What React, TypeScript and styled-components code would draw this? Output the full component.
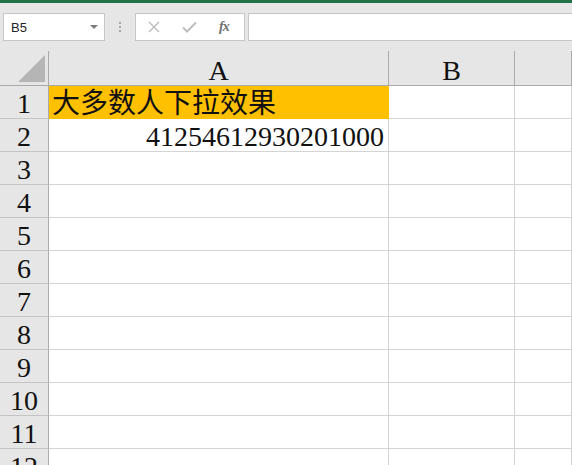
import React from 'react';
import styled, { createGlobalStyle } from 'styled-components';

const GlobalStyle = createGlobalStyle`
  html, body {
    margin: 0;
    padding: 0;
    background: #ffffff;
    overflow: hidden;
  }
`;

const Window = styled.div`
  width: 572px;
  height: 465px;
  overflow: hidden;
  background: #ffffff;
`;

// green ribbon edge at the very top
const RibbonEdge = styled.div`
  height: 3px;
  background: #217346;
`;

const FormulaBar = styled.div`
  height: 48px;
  box-sizing: border-box;
  padding: 10px 0 0 3px;
  background: #e6e6e6;
  display: flex;
  align-items: flex-start;
`;

const NameBox = styled.div`
  width: 102px;
  height: 28px;
  box-sizing: border-box;
  border: 1px solid #c6c6c6;
  background: #ffffff;
  display: flex;
  align-items: center;
  justify-content: space-between;
  padding: 0 5px 0 7px;
  font-family: "Liberation Sans", "DejaVu Sans", sans-serif;
  font-size: 13px;
  color: #222222;
`;

const DropArrow = styled.span`
  width: 0;
  height: 0;
  border-left: 4px solid transparent;
  border-right: 4px solid transparent;
  border-top: 4px solid #7a7a7a;
  margin-right: 1px;
`;

const Grip = styled.div`
  width: 30px;
  height: 28px;
  display: flex;
  flex-direction: column;
  align-items: center;
  justify-content: center;
  gap: 2px;
  & > span {
    width: 2px;
    height: 2px;
    background: #a8a8a8;
  }
`;

const FxBox = styled.div`
  width: 110px;
  height: 28px;
  box-sizing: border-box;
  border: 1px solid #c6c6c6;
  background: #ffffff;
  display: flex;
  align-items: center;
  padding-left: 12px;
  gap: 22px;
`;

const FxLabel = styled.span`
  font-family: "Liberation Serif", serif;
  font-style: italic;
  font-weight: bold;
  font-size: 14px;
  color: #707070;
  letter-spacing: -1px;
`;

const FormulaInput = styled.div`
  flex: 1;
  height: 28px;
  margin-left: 3px;
  box-sizing: border-box;
  border: 1px solid #c6c6c6;
  border-right: none;
  background: #ffffff;
`;

const Sheet = styled.div`
  display: grid;
  grid-template-columns: 49px 340px 126px 1fr;
  grid-template-rows: 35px;
  grid-auto-rows: 33px;
`;

const cellFont = `
  font-family: "Liberation Serif", "Noto Sans CJK SC", serif;
  font-size: 28px;
  color: #111111;
  box-sizing: border-box;
  white-space: nowrap;
  overflow: hidden;
`;

const Corner = styled.div`
  background: #e6e6e6;
  border-right: 1px solid #ababab;
  border-bottom: 1px solid #ababab;
  position: relative;
  &::after {
    content: '';
    position: absolute;
    left: 18px;
    top: 4px;
    width: 0;
    height: 0;
    border-left: 27px solid transparent;
    border-bottom: 27px solid #b5b5b5;
  }
`;

const ColHead = styled.div`
  ${cellFont}
  background: #e6e6e6;
  border-right: 1px solid #ababab;
  border-bottom: 1px solid #ababab;
  display: flex;
  align-items: flex-end;
  justify-content: center;
  line-height: 28px;
`;

const RowHead = styled.div`
  ${cellFont}
  background: #e6e6e6;
  border-right: 1px solid #ababab;
  border-bottom: 1px solid #c4c4c4;
  display: flex;
  align-items: center;
  justify-content: center;
  padding-top: 3px;
  line-height: 32px;
`;

const Cell = styled.div<{ $fill?: string; $align?: 'left' | 'right' }>`
  ${cellFont}
  background: ${({ $fill }) => $fill || '#ffffff'};
  border-right: 1px solid ${({ $fill }) => $fill || '#d4d4d4'};
  border-bottom: 1px solid ${({ $fill }) => $fill || '#d4d4d4'};
  display: flex;
  align-items: center;
  justify-content: ${({ $align }) => ($align === 'right' ? 'flex-end' : 'flex-start')};
  padding: 3px 4px 0 3px;
  line-height: 32px;
`;

type CellData = { text?: string; fill?: string; align?: 'left' | 'right' };

const rows: CellData[][] = [
  [{ text: '大多数人下拉效果', fill: '#ffc000' }, {}, {}],
  [{ text: '41254612930201000', align: 'right' }, {}, {}],
];

const RowCount = 12;

export default function App() {
  return (
    <Window>
      <GlobalStyle />
      <RibbonEdge />
      <FormulaBar>
        <NameBox>
          <span>B5</span>
          <DropArrow />
        </NameBox>
        <Grip>
          <span />
          <span />
          <span />
        </Grip>
        <FxBox>
          <svg width="12" height="12" viewBox="0 0 12 12">
            <path d="M1 1 L11 11 M11 1 L1 11" stroke="#bdbdbd" strokeWidth="1.4" fill="none" />
          </svg>
          <svg width="15" height="12" viewBox="0 0 15 12">
            <path d="M1 6.5 L5 10.5 L14 1.5" stroke="#bdbdbd" strokeWidth="2" fill="none" />
          </svg>
          <FxLabel>fx</FxLabel>
        </FxBox>
        <FormulaInput />
      </FormulaBar>
      <Sheet>
        <Corner />
        <ColHead>A</ColHead>
        <ColHead>B</ColHead>
        <ColHead />
        {Array.from({ length: RowCount }, (_, r) => {
          const data = rows[r] || [{}, {}, {}];
          return (
            <React.Fragment key={r}>
              <RowHead>{r + 1}</RowHead>
              {data.map((c, i) => (
                <Cell key={i} $fill={c.fill} $align={c.align}>
                  {c.text}
                </Cell>
              ))}
            </React.Fragment>
          );
        })}
      </Sheet>
    </Window>
  );
}
